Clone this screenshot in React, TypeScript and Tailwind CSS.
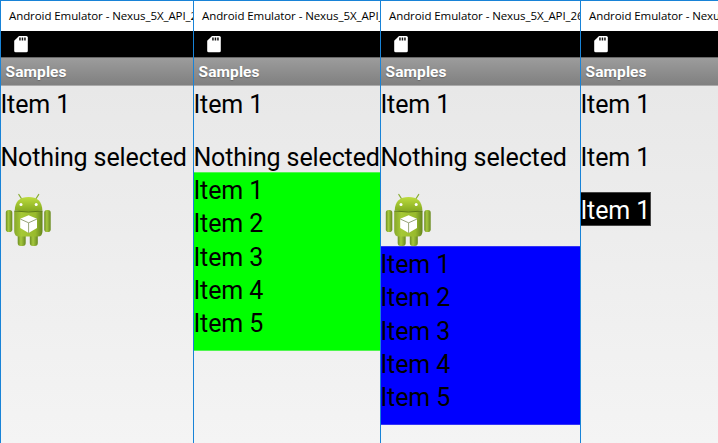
import type { ReactNode } from "react";

const ITEMS = ["Item 1", "Item 2", "Item 3", "Item 4", "Item 5"];

function SdCard() {
  return (
    <svg className="ml-[13px] mt-[5px] h-[17px] w-[14px] shrink-0" viewBox="0 0 14 17">
      <path d="M5 0H12.3Q13.8 0 13.8 1.5V14.7Q13.8 16.2 12.3 16.2H1.7Q0.2 16.2 0.2 14.7V4.8Z" fill="#fff" />
      <path d="M5.2 1.5h1.5v3H5.2zM7.7 1.5h1.5v3H7.7zM10.2 1.5h1.5v3h-1.5z" fill="#111" />
    </svg>
  );
}

function Robot() {
  return (
    <svg className="ml-[3.5px] block h-[54px] w-[46px]" viewBox="0 0 46 54">
      <defs>
        <linearGradient id="head" x1="0" y1="0" x2="0" y2="1">
          <stop offset="0" stopColor="#bddc3e" />
          <stop offset="1" stopColor="#83a820" />
        </linearGradient>
        <linearGradient id="body" x1="0" y1="0" x2="1" y2="0">
          <stop offset="0" stopColor="#87a82b" />
          <stop offset="0.25" stopColor="#a6c936" />
          <stop offset="0.75" stopColor="#98ba2c" />
          <stop offset="1" stopColor="#65851e" />
        </linearGradient>
        <linearGradient id="limb" x1="0" y1="0" x2="1" y2="0">
          <stop offset="0" stopColor="#6d8d22" />
          <stop offset="0.4" stopColor="#a6c83e" />
          <stop offset="1" stopColor="#68891f" />
        </linearGradient>
      </defs>
      <path d="M13.8 1.5L17 6.5M33.7 1.5L30.5 6.5" stroke="#8aad35" strokeWidth="1.3" strokeLinecap="round" />
      <rect x="12.7" y="38" width="8" height="15" rx="3" fill="url(#limb)" />
      <rect x="24.8" y="38" width="8" height="15" rx="3" fill="url(#limb)" />
      <rect x="0.8" y="17" width="6.5" height="22" rx="2.8" fill="url(#limb)" />
      <rect x="39.2" y="17" width="6.5" height="22" rx="2.8" fill="url(#limb)" />
      <path d="M9.2 18H37.5V38Q37.5 43.5 33 43.5H14Q9.2 43.5 9.2 38Z" fill="url(#body)" />
      <path d="M9.7 17.5C10 8 15 4 23.6 4S37 8 37.4 17.5Q23.6 19.5 9.7 17.5Z" fill="url(#head)" />
      <path d="M9.5 18Q23.6 20 37.4 18" fill="none" stroke="#5e7b18" strokeWidth="1" />
      <circle cx="16" cy="11.5" r="1.5" fill="#fff" />
      <circle cx="31.2" cy="11.5" r="1.5" fill="#fff" />
      <path d="M23.6 22.3L32 25.8V34.9L23.6 40L15.2 34.9V25.8Z" fill="#fff" />
      <path d="M15.2 26L23.6 29.8L32 26M23.6 29.8V40" fill="none" stroke="#8b9a6a" strokeWidth="0.9" />
    </svg>
  );
}

function Label({ text }: { text: string }) {
  return <div className="mb-5 h-[33.3px] whitespace-nowrap leading-[37px]">{text}</div>;
}

function ItemList({ className }: { className: string }) {
  return (
    <div className={"-mt-[0.5px] h-[178.5px] border-y leading-[35.6px] " + className}>
      {ITEMS.map((item) => (
        <div key={item} className="h-[33.35px] whitespace-nowrap">{item}</div>
      ))}
    </div>
  );
}

function Emulator({ width, children }: { width: string; children: ReactNode }) {
  return (
    <section className={"flex h-full shrink-0 flex-col overflow-hidden border-l border-t border-[#1883d7] bg-white " + width}>
      <header className="h-[30px] shrink-0 whitespace-nowrap pl-2 font-['Open_Sans',sans-serif] text-[11.5px] leading-[30px] tracking-[-0.08px] text-black">
        Android Emulator - Nexus_5X_API_26
      </header>
      <div className="flex h-[26px] shrink-0 bg-black">
        <SdCard />
      </div>
      <div className="h-[29px] shrink-0 border-b border-t border-b-[#aaa] border-t-[#686868] bg-linear-to-b from-[#9c9c9c] to-[#808080] pl-[4.5px] text-[15.5px] font-bold leading-[28px] tracking-[0.1px] text-white [text-shadow:0_1px_1px_#666]">
        Samples
      </div>
      <main className="flex-1 bg-linear-to-b from-[#e8e8e8] to-[#f4f4f4] indent-[-0.6px] text-[25px] tracking-[-0.12px] text-black">
        {children}
      </main>
    </section>
  );
}

export default function App() {
  return (
    <div className="flex h-[443px] w-[718px] overflow-hidden font-[Roboto,sans-serif]">
      <Emulator width="w-[193px]">
        <Label text="Item 1" />
        <Label text="Nothing selected" />
        <Robot />
      </Emulator>
      <Emulator width="w-[187px]">
        <Label text="Item 1" />
        <div className="h-[33.3px] whitespace-nowrap leading-[37px]">Nothing selected</div>
        <ItemList className="border-[#50f650] bg-[#00ff00]" />
      </Emulator>
      <Emulator width="w-[200px]">
        <Label text="Item 1" />
        <Label text="Nothing selected" />
        <Robot />
        <ItemList className="border-[#3434f5] bg-[#0000ff]" />
      </Emulator>
      <Emulator width="w-[138px]">
        <Label text="Item 1" />
        <Label text="Item 1" />
        <div className="-mt-[0.5px] h-[34px] w-[70px] whitespace-nowrap border border-l-0 border-[#444] bg-black leading-[35px] text-white">Item 1</div>
      </Emulator>
    </div>
  );
}
